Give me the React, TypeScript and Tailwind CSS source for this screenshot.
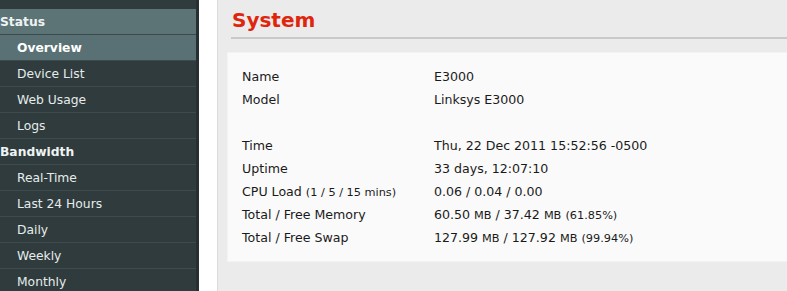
import React from "react";

const font = { fontFamily: '"DejaVu Sans", Verdana, sans-serif' };

type NavItem = { label: string; header?: boolean; active?: boolean };

const nav: NavItem[] = [
  { label: "Status", header: true },
  { label: "Overview", active: true },
  { label: "Device List" },
  { label: "Web Usage" },
  { label: "Logs" },
  { label: "Bandwidth", header: true },
  { label: "Real-Time" },
  { label: "Last 24 Hours" },
  { label: "Daily" },
  { label: "Weekly" },
  { label: "Monthly" },
];

function Sidebar() {
  return (
    <div className="w-[199px] shrink-0 bg-[#2f3b3c] border-r-[3px] border-r-[#263031] pt-[9px]">
      {nav.map((item) => {
        if (item.header) {
          return (
            <div
              key={item.label}
              className={
                item.label === "Status"
                  ? "h-[26px] flex items-center bg-[#5c7475] border-b border-b-[#3b4a4b] pt-[1px] text-[12.3px] font-bold text-[#eef3f3] pl-0"
                  : "h-[26px] flex items-center border-b border-b-[#3e4b4c] pt-[1px] text-[12.3px] font-bold text-[#eef3f3] pl-0"
              }
            >
              {item.label}
            </div>
          );
        }
        return (
          <div
            key={item.label}
            className={
              item.active
                ? "h-[26px] flex items-center bg-[#597174] border-b border-b-[#3b4a4b] pt-[1px] pl-[17px] text-[12.3px] font-bold text-white"
                : "h-[26px] flex items-center border-b border-b-[#3e4b4c] pt-[1px] pl-[17px] text-[12.3px] text-[#e6ecec]"
            }
          >
            {item.label}
          </div>
        );
      })}
    </div>
  );
}

const rows: { label: React.ReactNode; value: React.ReactNode }[] = [
  { label: "Name", value: "E3000" },
  { label: "Model", value: "Linksys E3000" },
];

const small = "text-[11.3px]";

const rows2: { label: React.ReactNode; value: React.ReactNode }[] = [
  { label: "Time", value: "Thu, 22 Dec 2011 15:52:56 -0500" },
  { label: "Uptime", value: "33 days, 12:07:10" },
  {
    label: (
      <>
        CPU Load <span className={small}>(1 / 5 / 15 mins)</span>
      </>
    ),
    value: "0.06 / 0.04 / 0.00",
  },
  {
    label: "Total / Free Memory",
    value: (
      <>
        60.50 <span className={small}>MB</span> / 37.42 <span className={small}>MB</span>{" "}
        <span className={small}>(61.85%)</span>
      </>
    ),
  },
  {
    label: "Total / Free Swap",
    value: (
      <>
        127.99 <span className={small}>MB</span> / 127.92 <span className={small}>MB</span>{" "}
        <span className={small}>(99.94%)</span>
      </>
    ),
  },
];

function Row({ label, value }: { label: React.ReactNode; value: React.ReactNode }) {
  return (
    <div className="flex h-[23px] items-center">
      <div className="w-[192px] shrink-0">{label}</div>
      <div>{value}</div>
    </div>
  );
}

export default function App() {
  return (
    <div className="flex h-[291px] w-[787px] overflow-hidden bg-white text-[#1a1a1a]" style={font}>
      <Sidebar />
      <div className="w-[19px] shrink-0 bg-white border-r border-r-[#dcdcdc]" />
      <div className="flex-1 bg-[#ebebeb] pl-[9px]">
        <div className="ml-[4px] h-[39px] border-b-2 border-b-[#c9c9c9] flex items-center pt-[3px] pl-[1px]">
          <h1 className="text-[20px] font-bold text-[#e0250d]">System</h1>
        </div>
        <div className="mt-[13px] bg-[#fafafa] border-t border-l border-b border-[#f3f3f3] pl-[14px] pt-[13px] pb-[11px] text-[12.6px]">
          {rows.map((r, i) => (
            <Row key={i} label={r.label} value={r.value} />
          ))}
          <div className="h-[23px]" />
          {rows2.map((r, i) => (
            <Row key={i} label={r.label} value={r.value} />
          ))}
        </div>
      </div>
    </div>
  );
}
